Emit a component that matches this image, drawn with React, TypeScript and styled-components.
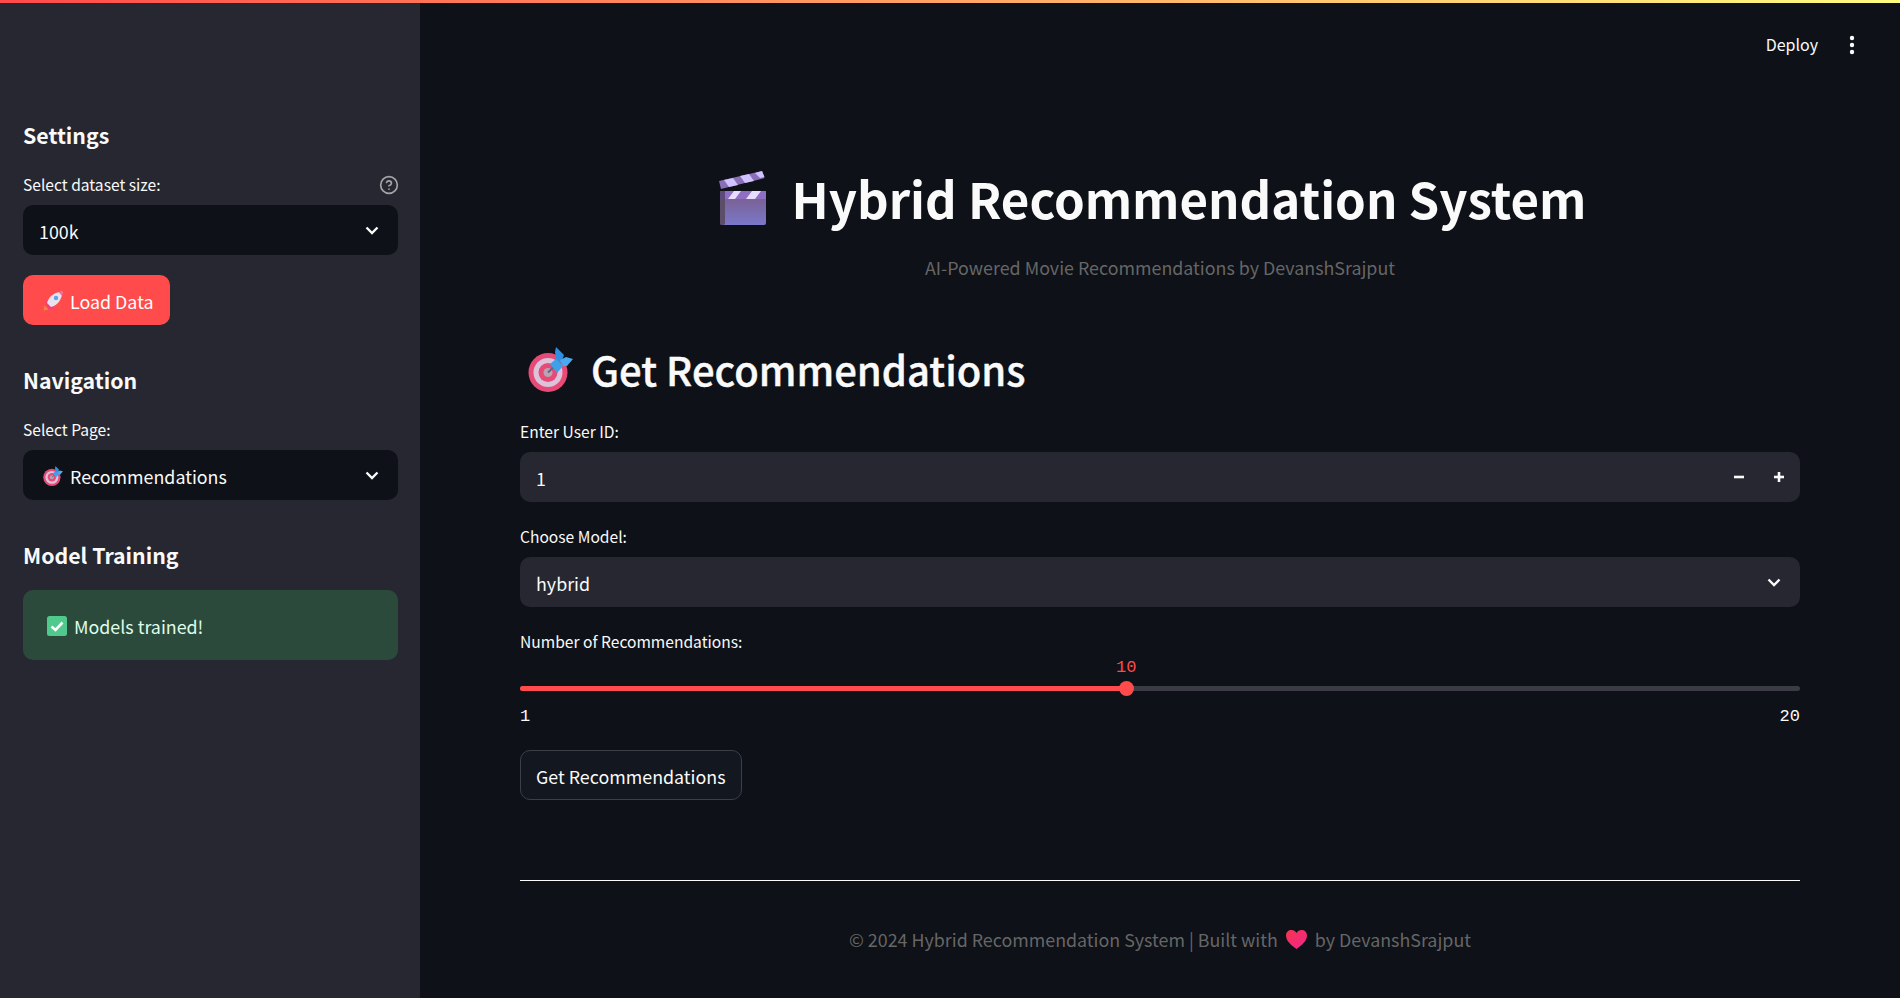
import React from 'react';
import styled, { createGlobalStyle } from 'styled-components';
import { CircleHelp } from 'lucide-react';

const SANS = '"Noto Sans CJK SC", "Noto Sans", sans-serif';

const GlobalStyle = createGlobalStyle`
  html, body {
    margin: 0;
    padding: 0;
    height: 100%;
    background: #0e1117;
  }
  * {
    box-sizing: border-box;
  }
`;

const ClapperEmoji: React.FC = () => (
  <svg width="47" height="54" viewBox="0 0 47 54">
    <defs>
      <linearGradient id="clapBody" x1="0" y1="0" x2="0" y2="1">
        <stop offset="0" stopColor="#7b5a86" />
        <stop offset="1" stopColor="#7a78c9" />
      </linearGradient>
    </defs>
    <polygon points="0,10 43,0 45.5,7 2,18" fill="#8a6fb6" />
    <polygon points="5,9 14,7 19,14 10,16" fill="#cfc2ff" />
    <polygon points="21,5 30,3 35,10 26,12" fill="#cfc2ff" />
    <polygon points="36,2 43,0 45.5,6 41,7" fill="#cfc2ff" />
    <rect x="1" y="20" width="46" height="34" rx="2" fill="url(#clapBody)" />
    <rect x="1" y="20" width="5" height="34" rx="2" fill="#5c4d68" />
    <rect x="1" y="20" width="46" height="8" fill="#8f6fc4" />
    <rect x="1" y="20" width="5" height="8" fill="#5c4a78" />
    <polygon points="9,28 15,20 22,20 16,28" fill="#e6deff" />
    <polygon points="27,28 33,20 42,20 36,28" fill="#e6deff" />
  </svg>
);

const DartEmoji: React.FC<{ size: number }> = ({ size }) => (
  <svg width={size} height={size} viewBox="0 0 45 45">
    <circle cx="20" cy="25.5" r="19.5" fill="#e84a78" />
    <circle cx="20" cy="25.5" r="14.5" fill="#dcc3da" />
    <circle cx="20" cy="25.5" r="9.5" fill="#e84a78" />
    <circle cx="20" cy="25.5" r="4.5" fill="#b9a3b4" />
    <line x1="20" y1="25.5" x2="28" y2="18" stroke="#5b6a80" strokeWidth="2" />
    <polygon points="22,17 28,12 35,19 29,26" fill="#3f9fe8" />
    <polygon points="28,12 27,5 28,0 36,8 33,16" fill="#2f8fe0" />
    <polygon points="32,13 38,10 45,12 39,19 35,19" fill="#47a9ef" />
  </svg>
);

const RocketEmoji: React.FC = () => (
  <svg width="20" height="20" viewBox="0 0 20 20">
    <polygon points="0.5,19.5 1.5,14.5 5.5,18.5" fill="#f08a3c" />
    <polygon points="2,10.5 7,8 12,13 9.5,18 6,18.5" fill="#ee3f82" />
    <path d="M4 12 C5.5 6 11 1 19.5 0.5 C19 9 14 14.5 8 16 Z" fill="#e9e2ee" />
    <path d="M15.5 1 C17 1 18.5 1 19.5 0.5 C19.5 2 19.3 3.5 19 5 Z" fill="#ee6f9c" />
    <circle cx="13" cy="7" r="2.2" fill="#56a8e8" />
  </svg>
);

const CheckEmoji: React.FC = () => (
  <svg width="20" height="20" viewBox="0 0 20 20">
    <rect width="20" height="20" rx="2.5" fill="#4fc98c" />
    <polyline points="4.5,10.5 8.5,14 15.5,6.5" fill="none" stroke="#fff" strokeWidth="2.6" />
  </svg>
);

const HeartEmoji: React.FC = () => (
  <svg width="21" height="19" viewBox="0 0 21 19">
    <defs>
      <linearGradient id="heartFill" x1="0" y1="0" x2="1" y2="1">
        <stop offset="0" stopColor="#f8344e" />
        <stop offset="1" stopColor="#f0258e" />
      </linearGradient>
    </defs>
    <path
      d="M10.5 19 C5 15 0 11 0 5.5 C0 2 2.5 0 5.5 0 C7.5 0 9.5 1 10.5 3 C11.5 1 13.5 0 15.5 0 C18.5 0 21 2 21 5.5 C21 11 16 15 10.5 19 Z"
      fill="url(#heartFill)"
    />
  </svg>
);

const Chevron: React.FC = () => (
  <svg width="14" height="9" viewBox="0 0 14 9">
    <polyline points="1.5,1.5 7,7 12.5,1.5" fill="none" stroke="#fafafa" strokeWidth="2.4" />
  </svg>
);

const MinusIcon: React.FC = () => (
  <svg width="12" height="12" viewBox="0 0 12 12">
    <rect x="1" y="4.7" width="10" height="2.6" fill="#fafafa" />
  </svg>
);

const PlusIcon: React.FC = () => (
  <svg width="12" height="12" viewBox="0 0 12 12">
    <rect x="1" y="4.7" width="10" height="2.6" fill="#fafafa" />
    <rect x="4.7" y="1" width="2.6" height="10" fill="#fafafa" />
  </svg>
);

const KebabIcon: React.FC = () => (
  <svg width="6" height="20" viewBox="0 0 6 20">
    <circle cx="3" cy="3" r="2.2" fill="#fafafa" />
    <circle cx="3" cy="10" r="2.2" fill="#fafafa" />
    <circle cx="3" cy="17" r="2.2" fill="#fafafa" />
  </svg>
);

const App: React.FC = () => {
  const sliderValue = 10;
  const sliderMin = 1;
  const sliderMax = 20;
  const progress = ((sliderValue - sliderMin) / (sliderMax - sliderMin)) * 100;

  return (
    <Page>
      <GlobalStyle />
      <Decoration />
      <Body>
        <Sidebar>
          <SideHeading>Settings</SideHeading>
          <LabelRow>
            <Label>Select dataset size:</Label>
            <HelpIcon size={20} color="rgba(250, 250, 250, 0.6)" strokeWidth={2} />
          </LabelRow>
          <Select $tone="dark">
            <SelectValue>100k</SelectValue>
            <Chevron />
          </Select>
          <PrimaryButton>
            <RocketEmoji />
            Load Data
          </PrimaryButton>

          <SideHeading $top={40}>Navigation</SideHeading>
          <LabelRow>
            <Label>Select Page:</Label>
          </LabelRow>
          <Select $tone="dark">
            <SelectValue $withIcon>
              <DartEmoji size={20} />
              Recommendations
            </SelectValue>
            <Chevron />
          </Select>

          <SideHeading $top={40}>Model Training</SideHeading>
          <SuccessAlert>
            <CheckEmoji />
            Models trained!
          </SuccessAlert>
        </Sidebar>

        <Main>
          <Toolbar>
            <DeployLink>Deploy</DeployLink>
            <KebabIcon />
          </Toolbar>
          <Content>
            <Title>
              <ClapperEmoji />
              Hybrid Recommendation System
            </Title>
            <Subtitle>AI-Powered Movie Recommendations by DevanshSrajput</Subtitle>

            <SectionHeading>
              <DartEmoji size={45} />
              Get Recommendations
            </SectionHeading>

            <LabelRow $top={29}>
              <Label>Enter User ID:</Label>
            </LabelRow>
            <Select $tone="light">
              <SelectValue>1</SelectValue>
              <Stepper>
                <MinusIcon />
                <PlusIcon />
              </Stepper>
            </Select>

            <LabelRow $top={25}>
              <Label>Choose Model:</Label>
            </LabelRow>
            <Select $tone="light">
              <SelectValue>hybrid</SelectValue>
              <Chevron />
            </Select>

            <LabelRow $top={25}>
              <Label>Number of Recommendations:</Label>
            </LabelRow>
            <Slider>
              <SliderTrack>
                <SliderFill style={{ width: `${progress}%` }} />
                <SliderThumb style={{ left: `${progress}%` }}>
                  <SliderValue>{sliderValue}</SliderValue>
                </SliderThumb>
              </SliderTrack>
              <SliderBounds>
                <span>{sliderMin}</span>
                <span>{sliderMax}</span>
              </SliderBounds>
            </Slider>

            <SecondaryButton>Get Recommendations</SecondaryButton>
            <Divider />
            <Footer>
              © 2024 Hybrid Recommendation System | Built with
              <HeartEmoji />
              by DevanshSrajput
            </Footer>
          </Content>
        </Main>
      </Body>
    </Page>
  );
};

export default App;

const Page = styled.div`
  display: flex;
  flex-direction: column;
  height: 100vh;
  overflow: hidden;
  font-family: ${SANS};
  color: #fafafa;
  background: #0e1117;
`;

const Decoration = styled.div`
  flex: none;
  height: 3px;
  background: linear-gradient(90deg, #ff4b4b, #fffd80);
`;

const Body = styled.div`
  display: flex;
  flex: 1;
  min-height: 0;
`;

const Sidebar = styled.aside`
  flex: none;
  width: 420px;
  padding: 117px 22px 0 23px;
  background: #262730;
`;

const SideHeading = styled.h3<{ $top?: number }>`
  margin: ${({ $top }) => $top ?? 0}px 0 0;
  font-size: 21.3px;
  line-height: 30px;
  font-weight: 600;
`;

const LabelRow = styled.div<{ $top?: number }>`
  display: flex;
  align-items: center;
  justify-content: space-between;
  height: 20px;
  margin: ${({ $top }) => $top ?? 25}px 0 10px;
`;

const Label = styled.label`
  padding-bottom: 2px;
  font-size: 15.6px;
  line-height: 20px;
`;

const HelpIcon = styled(CircleHelp)`
  margin-right: -1px;
`;

const Select = styled.div<{ $tone: 'dark' | 'light' }>`
  display: flex;
  align-items: center;
  justify-content: space-between;
  height: 50px;
  padding: 0 19px 0 16px;
  border-radius: 10px;
  background: ${({ $tone }) => ($tone === 'dark' ? '#0e1117' : '#262730')};
`;

const SelectValue = styled.div<{ $withIcon?: boolean }>`
  display: flex;
  align-items: center;
  gap: 7px;
  padding: 2px 0 0 ${({ $withIcon }) => ($withIcon ? 4 : 0)}px;
  font-size: 17.85px;
  line-height: 26px;
`;

const Stepper = styled.div`
  display: flex;
  align-items: center;
  gap: 28px;
  margin-right: -4px;
`;

const PrimaryButton = styled.button`
  display: flex;
  align-items: center;
  gap: 7px;
  height: 50px;
  margin-top: 20px;
  padding: 2px 16px 0 20px;
  border: none;
  border-radius: 10px;
  font-family: inherit;
  font-size: 17.85px;
  color: #fff;
  background: #ff4b4b;
`;

const SuccessAlert = styled.div`
  display: flex;
  align-items: center;
  gap: 7px;
  height: 70px;
  margin-top: 20px;
  padding: 2px 24px 0;
  border-radius: 10px;
  font-size: 17.85px;
  color: #dffde9;
  background: #2c4a3c;
`;

const Main = styled.main`
  flex: 1;
  min-width: 0;
`;

const Toolbar = styled.div`
  display: flex;
  align-items: center;
  justify-content: flex-end;
  gap: 31px;
  height: 83px;
  padding-right: 45px;
`;

const DeployLink = styled.span`
  margin-bottom: 2px;
  font-size: 16px;
  line-height: 24px;
`;

const Content = styled.div`
  padding: 80px 100px 0;
`;

const Title = styled.h1`
  display: flex;
  align-items: center;
  justify-content: center;
  gap: 26px;
  margin: 0;
  padding-right: 15px;
  font-size: 49.2px;
  line-height: 64px;
  font-weight: 700;
`;

const Subtitle = styled.p`
  margin: 25px 0 0;
  text-align: center;
  font-size: 17.85px;
  line-height: 24px;
  color: #666;
`;

const SectionHeading = styled.h2`
  display: flex;
  align-items: center;
  gap: 18px;
  margin: 66px 0 0;
  padding-left: 8px;
  font-size: 40px;
  line-height: 48px;
  font-weight: 500;
  -webkit-text-stroke: 0.4px #fafafa;
`;

const Slider = styled.div`
  padding-top: 23.5px;
  font-family: 'Liberation Mono', monospace;
  font-size: 17px;
  line-height: 16px;
`;

const SliderTrack = styled.div`
  position: relative;
  height: 5px;
  border-radius: 3px;
  background: #3a3b44;
`;

const SliderFill = styled.div`
  height: 100%;
  border-radius: 3px;
  background: #ff4b4b;
`;

const SliderThumb = styled.div`
  position: absolute;
  top: -5px;
  width: 15px;
  height: 15px;
  margin-left: -7.5px;
  border-radius: 50%;
  background: #ff4b4b;
`;

const SliderValue = styled.span`
  position: absolute;
  left: 50%;
  top: -21px;
  transform: translateX(-50%);
  color: #ff4b4b;
`;

const SliderBounds = styled.div`
  display: flex;
  justify-content: space-between;
  margin-top: 18.5px;
`;

const SecondaryButton = styled.button`
  display: block;
  height: 50px;
  margin-top: 25px;
  padding: 2px 15px 0;
  border: 1px solid #3d3f47;
  border-radius: 10px;
  font-family: inherit;
  font-size: 17.85px;
  color: #fafafa;
  background: #13171f;
`;

const Divider = styled.hr`
  height: 1px;
  margin: 80px 0 0;
  border: none;
  background: #fafafa;
`;

const Footer = styled.p`
  display: flex;
  align-items: center;
  justify-content: center;
  gap: 8px;
  margin: 46px 0 0;
  font-size: 17.85px;
  line-height: 24px;
  color: #666;
`;
